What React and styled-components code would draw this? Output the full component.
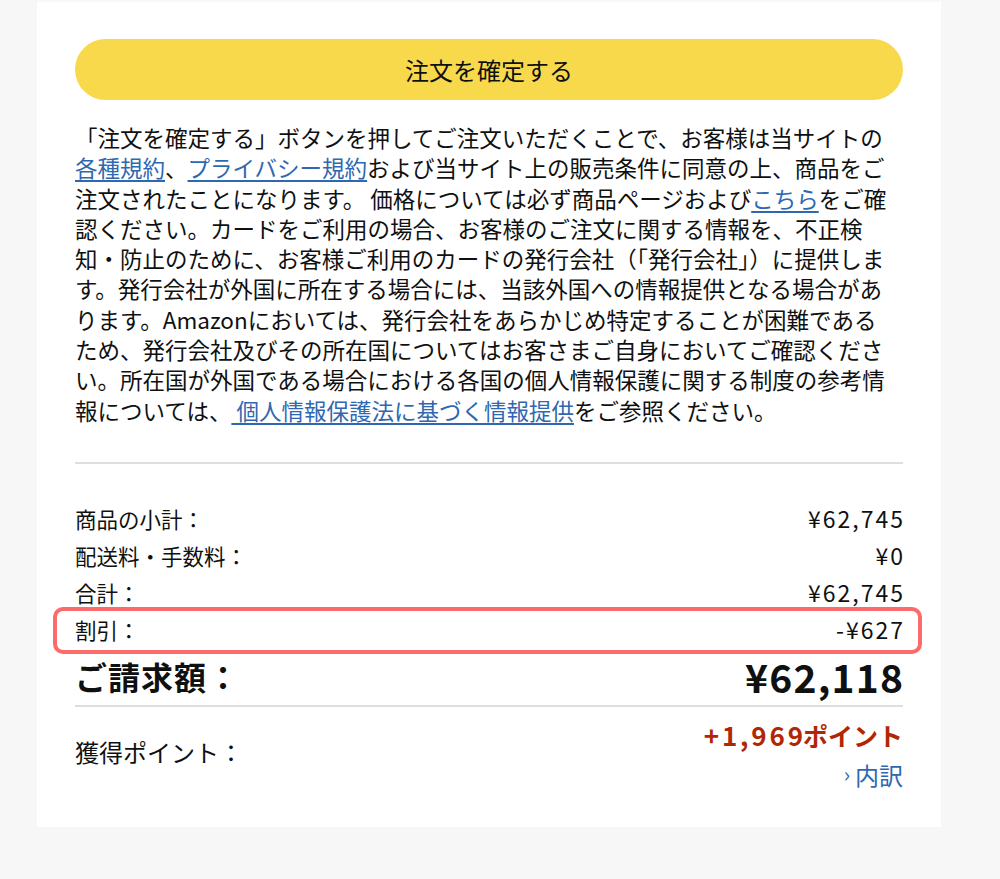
import React from "react";
import styled, { createGlobalStyle, css } from "styled-components";

const GlobalStyle = createGlobalStyle`
  html, body {
    margin: 0;
    padding: 0;
    background: #f7f7f7;
  }
  body {
    font-family: "Noto Sans CJK JP", "Noto Sans", sans-serif;
    color: #0f1111;
  }
`;

const Page = styled.div`
  min-height: 879px;
  box-sizing: border-box;
  padding: 2px 0 0 37px;
  background: #f7f7f7;
`;

const Card = styled.div`
  width: 904px;
  box-sizing: border-box;
  background: #ffffff;
  padding: 37px 38px 32px 38px;
  display: flex;
  flex-direction: column;
`;

const ConfirmButton = styled.button`
  height: 61px;
  width: 100%;
  border: none;
  border-radius: 31px;
  background: #f8d94b;
  font-family: "Noto Sans CJK JP", sans-serif;
  font-size: 24px;
  color: #0f1111;
  display: flex;
  align-items: center;
  justify-content: center;
  padding: 0;
  cursor: pointer;
`;

const Notice = styled.p`
  margin: 22px 0 0 0;
  font-size: 22.5px;
  line-height: 30.3px;
  white-space: nowrap;
  color: #0f1111;
`;

const Link = styled.a`
  color: #2f68b0;
  text-decoration: underline;
  text-underline-offset: 3px;
  text-decoration-thickness: 1.5px;
`;

const Divider = styled.hr`
  border: none;
  height: 2px;
  background: #dcdfdf;
  margin: ${(p) => p.$top || 0}px 0 0 0;
`;

const Summary = styled.div`
  margin-top: 36px;
  display: flex;
  flex-direction: column;
`;

const Row = styled.div`
  position: relative;
  display: flex;
  justify-content: space-between;
  align-items: center;
  height: 37px;
  font-size: 21.5px;
  color: #0f1111;
  ${(p) =>
    p.$highlight &&
    css`
      &::after {
        content: "";
        position: absolute;
        top: -4px;
        bottom: -6px;
        left: -22px;
        right: -19px;
        border: 4px solid #fb6b6b;
        border-radius: 10px;
        pointer-events: none;
      }
    `}
`;

const Amount = styled.span`
  font-size: ${(p) => (p.$size ? `${p.$size}px` : "inherit")};
  letter-spacing: ${(p) => p.$spacing}px;
  margin-right: -${(p) => p.$spacing}px;
`;

const TotalRow = styled.div`
  display: flex;
  justify-content: space-between;
  align-items: center;
  height: 57px;
  font-weight: 700;
  color: #0f1111;
`;

const TotalLabel = styled.span`
  font-size: 32px;
  letter-spacing: 1px;
`;

const PointsRow = styled.div`
  display: flex;
  justify-content: space-between;
  align-items: center;
  padding-top: 8px;
`;

const PointsLabel = styled.span`
  font-size: 24px;
  color: #0f1111;
  margin-top: -6px;
`;

const PointsRight = styled.div`
  display: flex;
  flex-direction: column;
  align-items: flex-end;
`;

const PointsValue = styled.span`
  font-size: 25px;
  line-height: 40px;
  font-weight: 700;
  color: #b12704;
`;

const Breakdown = styled.a`
  font-size: 24px;
  line-height: 40px;
  color: #2f68b0;
  text-decoration: none;
  display: flex;
  align-items: center;
  gap: 5px;
`;

const Chevron = styled.span`
  font-size: 21px;
  line-height: 1;
  margin-top: -3px;
`;

const rows = [
  { label: "商品の小計：", value: "¥62,745" },
  { label: "配送料・手数料：", value: "¥0" },
  { label: "合計：", value: "¥62,745" },
  { label: "割引：", value: "-¥627", highlight: true },
];

export default function App() {
  return (
    <>
      <GlobalStyle />
      <Page>
        <Card>
          <ConfirmButton>注文を確定する</ConfirmButton>
          <Notice>
            「注文を確定する」ボタンを押してご注文いただくことで、お客様は当サイトの
            <br />
            <Link>各種規約</Link>、<Link>プライバシー規約</Link>
            および当サイト上の販売条件に同意の上、商品をご
            <br />
            注文されたことになります。 価格については必ず商品ページおよび
            <Link>こちら</Link>をご確
            <br />
            認ください。カードをご利用の場合、お客様のご注文に関する情報を、不正検
            <br />
            知・防止のために、お客様ご利用のカードの発行会社（「発行会社」）に提供しま
            <br />
            す。発行会社が外国に所在する場合には、当該外国への情報提供となる場合があ
            <br />
            ります。Amazonにおいては、発行会社をあらかじめ特定することが困難である
            <br />
            ため、発行会社及びその所在国についてはお客さまご自身においてご確認くださ
            <br />
            い。所在国が外国である場合における各国の個人情報保護に関する制度の参考情
            <br />
            報については、<Link>{" 個人情報保護法に基づく情報提供"}</Link>
            をご参照ください。
          </Notice>
          <Divider $top={37} />
          <Summary>
            {rows.map((r) => (
              <Row key={r.label} $highlight={r.highlight}>
                <span>{r.label}</span>
                <Amount $size={23} $spacing={2}>
                  {r.value}
                </Amount>
              </Row>
            ))}
            <TotalRow>
              <TotalLabel>ご請求額：</TotalLabel>
              <Amount $size={39} $spacing={1.2}>
                ¥62,118
              </Amount>
            </TotalRow>
          </Summary>
          <Divider $top={0} />
          <PointsRow>
            <PointsLabel>獲得ポイント：</PointsLabel>
            <PointsRight>
              <PointsValue>
                <Amount $size={26} $spacing={2.8}>
                  +1,969
                </Amount>
                <Amount $spacing={0}>ポイント</Amount>
              </PointsValue>
              <Breakdown>
                <Chevron>›</Chevron>内訳
              </Breakdown>
            </PointsRight>
          </PointsRow>
        </Card>
      </Page>
    </>
  );
}
